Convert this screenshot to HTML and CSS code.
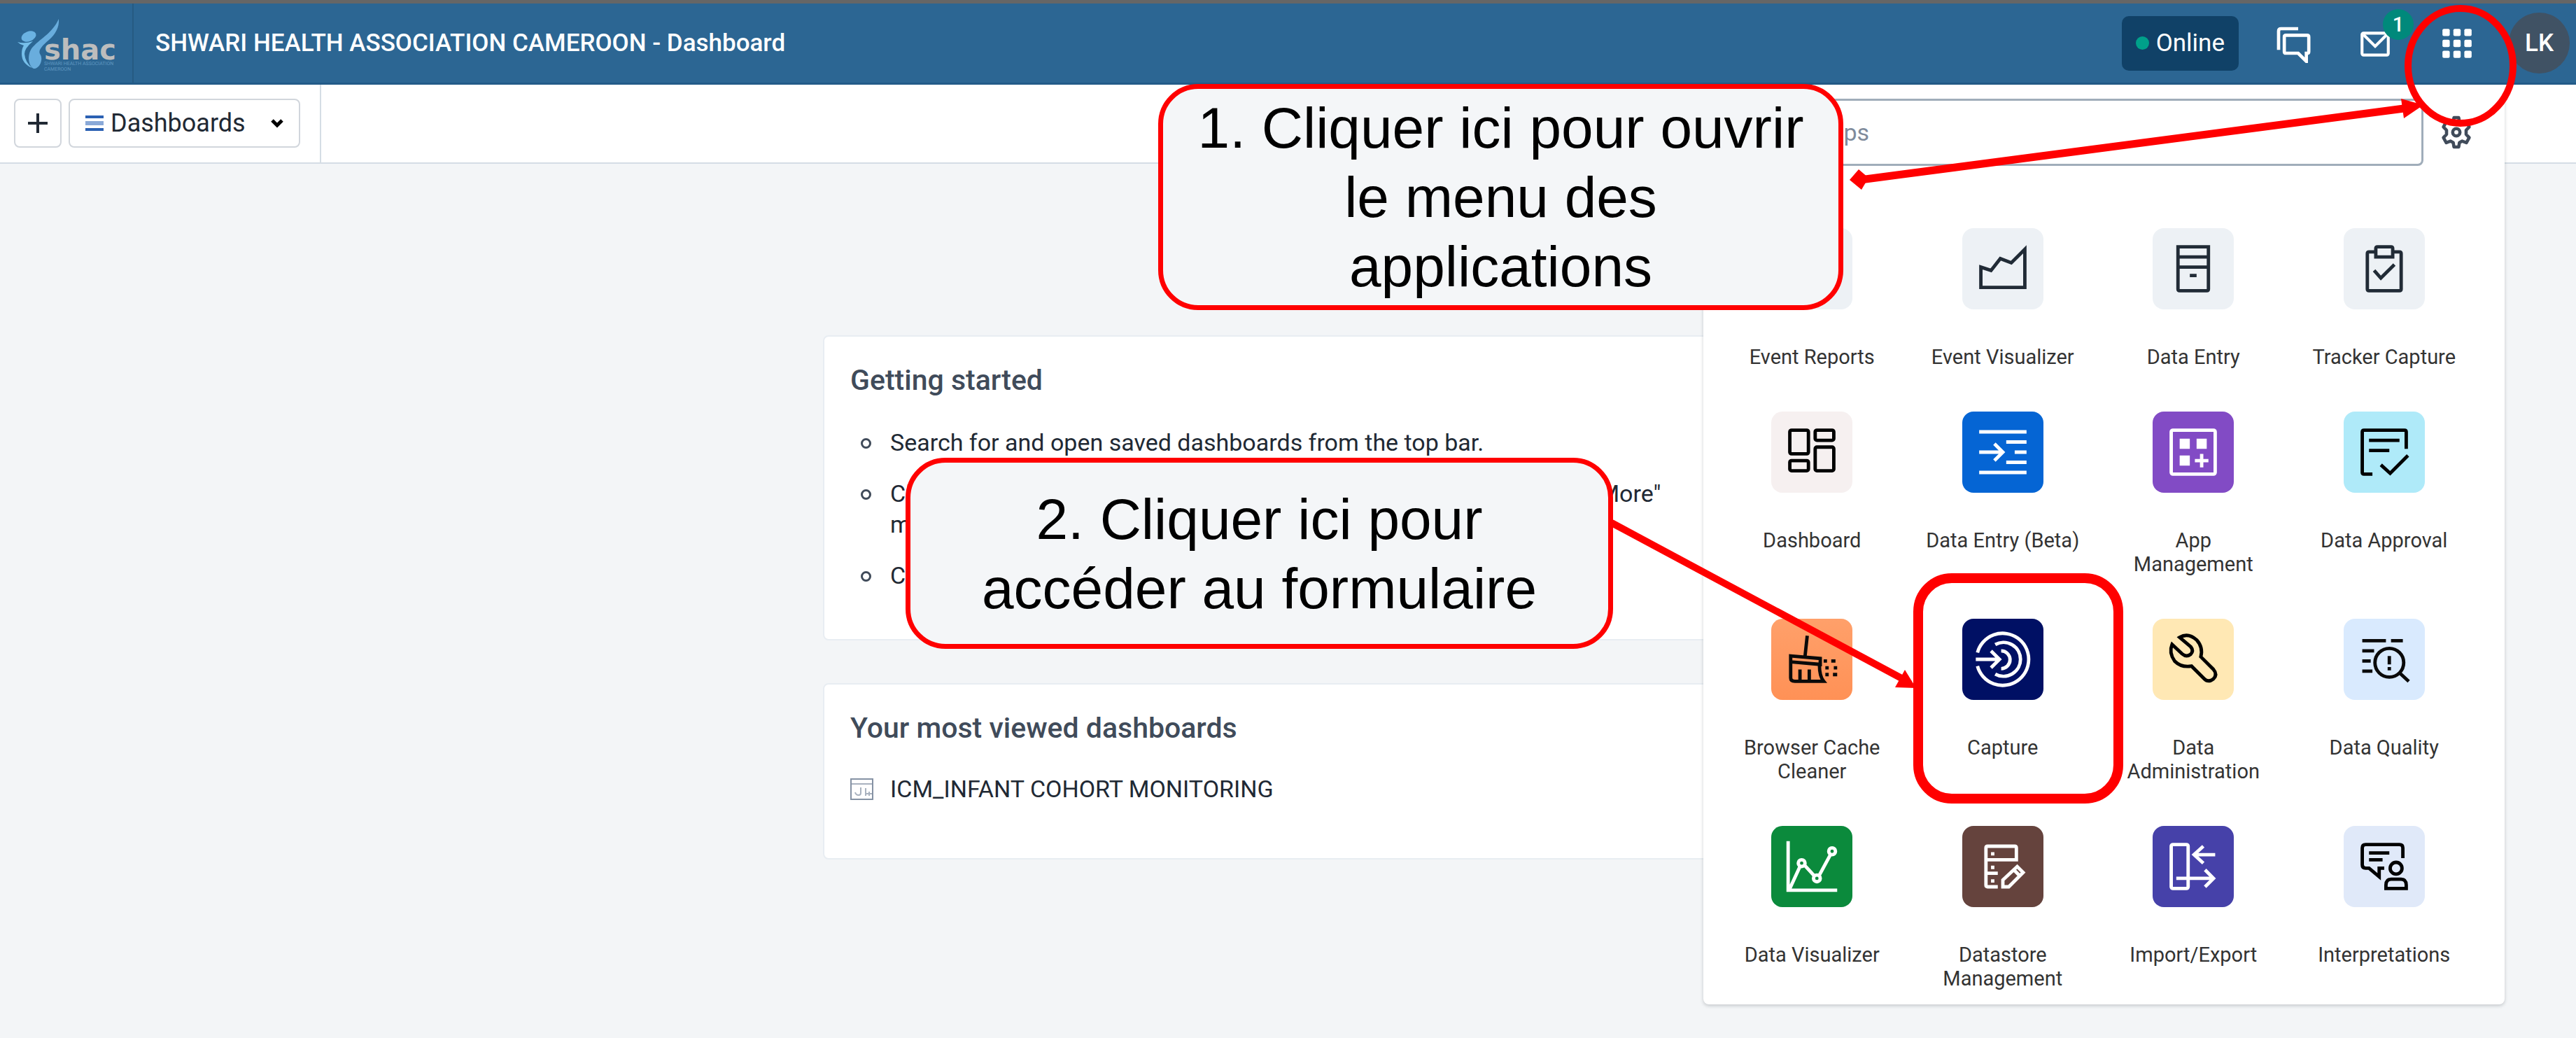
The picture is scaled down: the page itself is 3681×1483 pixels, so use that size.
FILE: index.html
```html
<!DOCTYPE html>
<html lang="en">
<head>
<meta charset="utf-8">
<title>SHWARI HEALTH ASSOCIATION CAMEROON - Dashboard</title>
<link rel="stylesheet" href="styles.css">
</head>
<body>
<header class="header">
  <a class="logo" href="#" aria-label="shac home">
    <svg class="logo-mark" viewBox="0 0 60 72" aria-hidden="true">
      <path d="M59 0C60 12 54 22 45 30C37 37 29 44 32 50C38 58 31 72 23 71C14 66 14 48 22 40C34 27 50 20 59 0Z" fill="#69addd"/>
      <ellipse cx="16" cy="25" rx="11" ry="7" transform="rotate(-22 16 25)" fill="#6ab2e2"/>
      <path d="M0 33Q10 36 22 32Q10 42 10 50Q11 62 21 70Q6 64 6 50Q6 42 9 38Q4 37 0 33Z" fill="#76bfea"/>
    </svg>
    <span class="logo-text"><span class="logo-name">shac</span><span class="logo-line">SHWARI HEALTH ASSOCIATION</span><span class="logo-line">CAMEROON</span></span>
  </a>
  <h1 class="header-title">SHWARI HEALTH ASSOCIATION CAMEROON - Dashboard</h1>
  <div class="online"><span class="online-dot"></span>Online</div>
  <button class="header-btn" aria-label="Interpretations">
    <svg class="icon-chat" viewBox="0 0 24 24" fill="none" stroke="#fff" stroke-width="2"><path d="M3 16V4.500Q3 3 4.500 3H15"/><path d="M7.500 7H20.500Q21.500 7 21.500 8V17Q21.500 18 20.500 18H20V23L15 18H7.500Q6.500 18 6.500 17V8Q6.500 7 7.500 7Z"/></svg>
  </button>
  <button class="header-btn" aria-label="Messages">
    <svg class="icon-head" viewBox="0 0 24 24" fill="none" stroke="#fff" stroke-width="2"><rect x="3" y="5" width="18" height="15" rx="1"/><path d="M4 6L12 14L20 6"/></svg>
    <span class="badge">1</span>
  </button>
  <button class="header-btn" aria-label="Apps">
    <svg class="icon-head" viewBox="0 0 24 24" fill="#fff"><rect x="2" y="2" width="5" height="5" rx="1"/><rect x="9.500" y="2" width="5" height="5" rx="1"/><rect x="17" y="2" width="5" height="5" rx="1"/><rect x="2" y="9.500" width="5" height="5" rx="1"/><rect x="9.500" y="9.500" width="5" height="5" rx="1"/><rect x="17" y="9.500" width="5" height="5" rx="1"/><rect x="2" y="17" width="5" height="5" rx="1"/><rect x="9.500" y="17" width="5" height="5" rx="1"/><rect x="17" y="17" width="5" height="5" rx="1"/></svg>
  </button>
  <button class="avatar" aria-label="Profile">LK</button>
</header>

<nav class="toolbar">
  <button class="tool-btn tool-add" aria-label="New dashboard"><svg viewBox="0 0 28 28" fill="none" stroke="#212934" stroke-width="4"><path d="M14 0V28M0 14H28"/></svg></button>
  <button class="tool-btn tool-list">
    <svg class="list-icon" viewBox="0 0 26 22"><path d="M0 0H26V4H0ZM0 18H26V22H0Z" fill="#2b61b3"/><path d="M0 8H26V14H0Z" fill="#8aa9d8"/></svg>
    Dashboards
    <svg class="chevron" viewBox="0 0 18 14" fill="none" stroke="#000" stroke-width="5"><path d="M2 3L9 10L16 3"/></svg>
  </button>
</nav>

<main class="content">
  <section class="card card-start">
    <h2>Getting started</h2>
    <ul>
      <li>Search for and open saved dashboards from the top bar.</li>
      <li>Click a dashboard chip to open it. Get back to this screen from the "More" menu.</li>
      <li>Create a new dashboard with the + button.</li>
    </ul>
  </section>
  <section class="card card-viewed">
    <h2>Your most viewed dashboards</h2>
    <a class="viewed-link" href="#">
      <svg class="viewed-icon" viewBox="0 0 33 31" fill="none" stroke="#8592a4" stroke-width="2"><rect x="1" y="1" width="31" height="29"/><path d="M1 8H32M15 13V21Q15 24 12 24Q8 24 7 20M22 14V25M27 19V25M22 22H31" opacity=".7"/></svg>
      ICM_INFANT COHORT MONITORING
    </a>
  </section>
</main>

<aside class="apps">
  <div class="apps-top">
    <input class="search" type="text" placeholder="Search apps" aria-label="Search apps">
    <button class="gear" aria-label="Menu settings">
      <svg viewBox="0 0 24 24" fill="none" stroke="#404b5a" stroke-width="2.300"><circle cx="12" cy="12" r="2.600"/><path d="M10.300 1.500H13.700L14.200 4.600L16.200 5.700L19.200 4.600L21.200 8.200L19 10.500V13.500L21.200 15.800L19.200 19.400L16.200 18.300L14.200 19.400L13.700 22.500H10.300L9.800 19.400L7.800 18.300L4.800 19.400L2.800 15.800L5 13.500V10.500L2.800 8.200L4.800 4.600L7.800 5.700L9.800 4.600Z" stroke-linejoin="round"/></svg>
    </button>
  </div>
  <div class="apps-grid">
    <a class="app" href="#"><span class="tile t-grey"><svg viewBox="0 0 48 48" fill="none" stroke="#212b36" stroke-width="2"><path d="M11 11H31V37H11ZM11 19H31M20 11V37"/></svg></span><span class="app-name">Event Reports</span></a>
    <a class="app" href="#"><span class="tile t-grey"><svg viewBox="0 0 48 48" fill="none" stroke="#212b36" stroke-width="2"><path d="M11 23L17 25L22.500 18L29 20.500L37 12.500V35H11Z"/></svg></span><span class="app-name">Event Visualizer</span></a>
    <a class="app" href="#"><span class="tile t-grey"><svg viewBox="0 0 48 48" fill="none" stroke="#212b36" stroke-width="2"><path d="M15 11H33V36Q33 37 32 37H16Q15 37 15 36ZM15 17H33M15 23H33M22 28H26"/></svg></span><span class="app-name">Data Entry</span></a>
    <a class="app" href="#"><span class="tile t-grey"><svg viewBox="0 0 48 48" fill="none" stroke="#212b36" stroke-width="2"><path d="M19 14H15Q14 14 14 15V36Q14 37 15 37H33Q34 37 34 36V15Q34 14 33 14H29"/><path d="M19 17V12Q19 11 20 11H28Q29 11 29 12V17ZM18 25L22 29.500L30 21.500"/></svg></span><span class="app-name">Tracker Capture</span></a>

    <a class="app" href="#"><span class="tile t-blush"><svg viewBox="0 0 48 48" fill="none" stroke="#000" stroke-width="2"><rect x="11" y="11" width="11" height="14" rx="1"/><rect x="26" y="11" width="11" height="6" rx="1"/><rect x="11" y="29" width="11" height="6" rx="1"/><rect x="26" y="21" width="11" height="14" rx="1"/></svg></span><span class="app-name">Dashboard</span></a>
    <a class="app" href="#"><span class="tile t-blue"><svg viewBox="0 0 48 48" fill="none" stroke="#fff" stroke-width="2"><path d="M10 12H38M26 18H38M31 24H38M26 30H38M10 36H38M10 24H24M19 19L24 24L19 29"/></svg></span><span class="app-name">Data Entry (Beta)</span></a>
    <a class="app" href="#"><span class="tile t-purple"><svg viewBox="0 0 48 48" fill="none" stroke="#fff" stroke-width="2"><rect x="11" y="11" width="26" height="26" rx="1"/><path d="M16 16H22V22H16ZM26 16H32V22H26ZM16 26H22V32H16Z" fill="#fff" stroke="none"/><path d="M29 25V33M25 29H33"/></svg></span><span class="app-name">App Management</span></a>
    <a class="app" href="#"><span class="tile t-cyan"><svg viewBox="0 0 48 48" fill="none" stroke="#000" stroke-width="2"><path d="M37 22V12Q37 11 36 11H12Q11 11 11 12V36Q11 37 12 37H17M15 17H33M15 23H27M22 31.500L27.500 36.500L38 26"/></svg></span><span class="app-name">Data Approval</span></a>

    <a class="app" href="#"><span class="tile t-orange"><svg viewBox="0 0 48 48" fill="none" stroke="#0a0a0a" stroke-width="2"><path d="M21.300 10L20 22M11.500 22L29 23.500V27L11.500 25.500ZM11.500 25V35Q11.500 37 14 37H31Q28.500 34 28.500 27M17 30V36M22.500 30V36"/><path d="M31 25H33M35.500 25H38M32 29H34M37 29H39M32 33H34M36.500 33H39"/></svg></span><span class="app-name">Browser Cache Cleaner</span></a>
    <a class="app" href="#"><span class="tile t-navy"><svg viewBox="0 0 48 48" fill="none" stroke="#fff" stroke-width="2"><path d="M9 20A15.400 15.400 0 1 1 9 28M19.500 15.300A10 10 0 1 1 19.500 32.700M23 19A5.200 5.200 0 1 1 23 29.500M8 24H22M17 19L22 24L17 29"/></svg></span><span class="app-name">Capture</span></a>
    <a class="app" href="#"><span class="tile t-yellow"><svg viewBox="0 0 48 48" fill="none" stroke="#000" stroke-width="2"><path d="M16 11L22.500 16.500Q24.500 19 22.500 21Q20 23 17.500 20.800L11.500 15.200Q9.500 20 13 25Q17 29 23 28L30.500 35.500Q33 38 36 35.500Q38.500 33 36 30L28.500 22.500Q30 17 26 12.500Q21 8 16 11Z"/></svg></span><span class="app-name">Data Administration</span></a>
    <a class="app" href="#"><span class="tile t-sky"><svg viewBox="0 0 48 48" fill="none" stroke="#0a0a0a" stroke-width="2"><path d="M11 13H25M28 13H35M11 19H18M11 25H16M11 31H17"/><circle cx="27" cy="26" r="8.500"/><path d="M33 32L38.500 37M27 22V27M27 28.500V30.500"/></svg></span><span class="app-name">Data Quality</span></a>

    <a class="app" href="#"><span class="tile t-green"><svg viewBox="0 0 48 48" fill="none" stroke="#fff" stroke-width="2"><path d="M10 9V38H39M11 37L17 24M20 23.500L25.500 29.500M28.500 29L35 17"/><circle cx="18" cy="22" r="2"/><circle cx="27" cy="31" r="2"/><circle cx="36" cy="15" r="2"/></svg></span><span class="app-name">Data Visualizer</span></a>
    <a class="app" href="#"><span class="tile t-brown"><svg viewBox="0 0 48 48" fill="none" stroke="#fff" stroke-width="2"><path d="M21 36H15Q14 36 14 35V13Q14 12 15 12H31Q32 12 32 13V20H14M14 28H21M17 16.500H19M17 24.500H19M17 32.500H19M24 36V32L32.500 24L36 27.500L27.500 36ZM30.500 26L34 29.500"/></svg></span><span class="app-name">Datastore Management</span></a>
    <a class="app" href="#"><span class="tile t-indigo"><svg viewBox="0 0 48 48" fill="none" stroke="#fff" stroke-width="2"><rect x="11" y="11" width="10" height="26" rx="1"/><path d="M37 17H24M30 12L24.500 17L30 22M14 31H36M31 26L36 31L31 36"/></svg></span><span class="app-name">Import/Export</span></a>
    <a class="app" href="#"><span class="tile t-pale"><svg viewBox="0 0 48 48" fill="none" stroke="#000" stroke-width="2"><path d="M35 19V13Q35 11 33 11H13Q11 11 11 13V23Q11 25 13 25H15L21 30V25H24M15 16H27M15 20H23"/><circle cx="31" cy="25" r="3.500"/><path d="M25 37V35Q25 31.500 28 31.500H34Q37 31.500 37 35V37Z"/></svg></span><span class="app-name">Interpretations</span></a>
  </div>
</aside>

<div class="callout callout-open">1. Cliquer ici pour ouvrir le menu des applications</div>
<div class="callout callout-form">2. Cliquer ici pour accéder au formulaire</div>
<svg class="marks" viewBox="0 0 1400 1200" fill="none" stroke="#f00" aria-hidden="true">
  <ellipse cx="1235" cy="94" rx="75" ry="82" stroke-width="10"/>
  <path d="M377 257L1154 155" stroke-width="11"/>
  <path d="M1150 141L1182 150L1154 169ZM362 257L375 242L389 254L379 271Z" fill="#f00" stroke="none"/>
  <path d="M22 747L438 970" stroke-width="10"/>
  <path d="M457 983L441 957L427 982Z" fill="#f00" stroke="none"/>
  <rect x="460" y="826" width="286" height="315" rx="48" stroke-width="14"/>
</svg>
</body>
</html>
```
FILE: styles.css
```css
* { box-sizing: border-box; }

body {
  position: relative;
  margin: 0;
  min-height: 100vh;
  background: #f3f5f7;
  color: #212934;
  font-family: Roboto, "Liberation Sans", sans-serif;
  font-size: 34px;
  line-height: 44px;
  overflow-x: hidden;
}

button { font: inherit; color: inherit; background: none; border: 0; padding: 0; }
a { color: inherit; text-decoration: none; }
svg { display: block; }

/* Header bar */
.header {
  display: flex;
  align-items: center;
  height: 121px;
  padding-right: 9px;
  border-top: 5px solid #666;
  border-bottom: 3px solid #235b88;
  background: #2c6693;
  color: #fff;
  font-size: 35px;
}
.logo {
  display: flex;
  align-self: stretch;
  align-items: flex-start;
  width: 191px;
  padding: 22px 0 0 25px;
  border-right: 2px solid #265a82;
}
.logo-mark { width: 60px; height: 72px; flex: none; }
.logo-text { display: flex; flex-direction: column; margin: 28px 0 0 -22px; white-space: nowrap; }
.logo-name { font: bold 40px/32px "DejaVu Sans", sans-serif; color: #bdbdbd; }
.logo-line { font-size: 7px; line-height: 8px; color: #5f97c0; }
.header-title { flex: 1; margin: 0; padding-left: 31px; font-size: 35px; font-weight: 500; }
.online {
  display: flex;
  align-items: center;
  gap: 10px;
  height: 78px;
  padding: 0 20px;
  margin-right: 29px;
  border-radius: 10px;
  background: #104167;
}
.online-dot { width: 19px; height: 19px; border-radius: 50%; background: #00a08a; }
.header-btn { position: relative; display: grid; place-items: center; width: 97px; height: 113px; margin-right: 20px; }
.icon-head { width: 50px; height: 50px; }
.icon-chat { width: 56px; height: 56px; }
.badge {
  position: absolute;
  top: 8px;
  right: -7px;
  width: 44px;
  height: 44px;
  border-radius: 50%;
  background: #00897b;
  font-size: 29px;
  font-weight: 500;
}
.avatar { width: 87px; height: 87px; margin-left: 6px; border-radius: 50%; background: #405264; font-weight: 500; }

/* Dashboards toolbar */
.toolbar {
  display: flex;
  gap: 10px;
  width: 100%;
  height: 113px;
  padding: 20px;
  border-bottom: 2px solid #d5dde5;
  background: linear-gradient(#d5dde5, #d5dde5) 457px 0 / 2px 100% no-repeat #fff;
  font-size: 36px;
}
.tool-btn { display: flex; align-items: center; height: 70px; border: 2px solid #d1d6dc; border-radius: 8px; }
.tool-add { justify-content: center; width: 68px; }
.tool-add svg { width: 28px; height: 28px; }
.tool-list { gap: 10px; width: 331px; padding: 0 22px; }
.list-icon { width: 26px; height: 22px; }
.chevron { width: 18px; height: 14px; margin-left: auto; }

/* Start page cards */
.content { display: grid; gap: 61px; max-width: 1329px; margin: 245px auto 0; }
.card { padding: 38px 37px; border: 2px solid #e8edf2; border-radius: 8px; background: #fff; }
.card h2 { margin: 0; font-size: 41px; line-height: 48px; font-weight: 500; color: #404b5a; }
.card-start { height: 436px; }
.card-viewed { height: 252px; }
.card ul { display: grid; gap: 29px; margin: 43px 0 0; padding: 0; list-style: none; }
.card li { position: relative; padding: 0 60px 0 57px; }
.card li::before {
  content: "";
  position: absolute;
  left: 15px;
  top: 16px;
  width: 9px;
  height: 9px;
  border: 3px solid #404b5a;
  border-radius: 50%;
}
.viewed-link { display: flex; align-items: center; gap: 24px; margin-top: 41px; }
.viewed-icon { width: 33px; height: 31px; }

/* Apps menu */
.apps {
  position: absolute;
  top: 121px;
  right: 102px;
  width: 1145px;
  padding: 20px 36px 20px 19px;
  border-radius: 0 0 8px 8px;
  background: #fff;
  box-shadow: 0 2px 5px rgba(33, 41, 52, 0.22);
}
.apps-top { display: flex; align-items: center; height: 96px; }
.search {
  flex: 1;
  height: 96px;
  padding: 0 28px;
  border: 3px solid #a0adba;
  border-radius: 8px;
  font: inherit;
}
.search::placeholder { color: #7f8b9b; opacity: 1; }
.gear { width: 48px; height: 48px; margin: 0 9px 0 23px; }
.apps-grid { display: grid; grid-template-columns: repeat(4, 1fr); row-gap: 61px; margin-top: 89px; }
.app { display: flex; flex-direction: column; align-items: center; gap: 51px; }
.tile { display: block; width: 116px; height: 116px; border-radius: 16px; }
.tile svg { width: 116px; height: 116px; }
.app-name { max-width: 228px; font-size: 29px; line-height: 34px; text-align: center; color: #333; }
.t-grey { background: #edf1f5; }
.t-blush { background: #f6f0f0; }
.t-blue { background: #0565d4; }
.t-purple { background: #824bc5; }
.t-cyan { background: #afeaf9; }
.t-orange { background: linear-gradient(#ffa06a, #ff9156); }
.t-navy { background: #001064; }
.t-yellow { background: #ffe8b4; }
.t-sky { background: #d9eafe; }
.t-green { background: #0b8a3c; }
.t-brown { background: #65433d; }
.t-indigo { background: #4641a9; }
.t-pale { background: #e0e9f9; }

/* Tutorial annotations */
.callout {
  position: absolute;
  display: grid;
  place-items: center;
  border: 7px solid #f00;
  border-radius: 57px;
  background: #f4f6f8;
  color: #000;
  font: 82px/99px "Liberation Sans", sans-serif;
  text-align: center;
}
.callout-open { top: 120px; right: 1047px; width: 979px; height: 323px; padding: 0 40px; }
.callout-form { top: 654px; right: 1376px; width: 1011px; height: 273px; padding: 0 90px; }
.marks { position: absolute; top: 0; right: 0; width: 1400px; height: 1200px; pointer-events: none; }
```
